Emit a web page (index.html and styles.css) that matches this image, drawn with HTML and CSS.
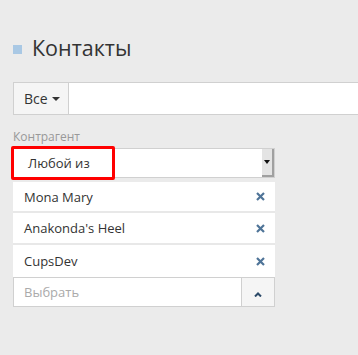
FILE: index.html
```html
<!DOCTYPE html>
<html>
<head>
  <title>Контакты</title>
  <link rel="stylesheet" href="styles.css">
</head>
<body>
  <div class="page">
    <h1 class="title"><span class="title-mark"></span>Контакты</h1>

    <div class="search">
      <button class="search-filter">Все <span class="caret"></span></button>
      <input class="search-input" type="text">
    </div>

    <div class="field">
      <label class="field-label">Контрагент</label>
      <div class="select">
        <span class="select-value">Любой из</span>
        <span class="select-arrow"><span class="select-tri"></span></span>
        <span class="highlight"></span>
      </div>

      <ul class="chosen">
        <li class="chosen-item">Mona Mary
          <svg class="remove" width="9" height="9" viewBox="0 0 9 9"><path d="M1 1L8 8M8 1L1 8"/></svg>
        </li>
        <li class="chosen-item">Anakonda's Heel
          <svg class="remove" width="9" height="9" viewBox="0 0 9 9"><path d="M1 1L8 8M8 1L1 8"/></svg>
        </li>
        <li class="chosen-item">CupsDev
          <svg class="remove" width="9" height="9" viewBox="0 0 9 9"><path d="M1 1L8 8M8 1L1 8"/></svg>
        </li>
      </ul>

      <div class="picker">
        <input class="picker-input" type="text" placeholder="Выбрать">
        <button class="picker-toggle">
          <svg width="8" height="5" viewBox="0 0 8 5"><path d="M1 4.5L4 1.5L7 4.5"/></svg>
        </button>
      </div>
    </div>
  </div>
</body>
</html>
```

FILE: styles.css
```css
html {
  overflow: hidden;
}

body {
  margin: 0;
  background: #ebebeb;
  font-family: "Open Sans", Arial, sans-serif;
  color: #333;
}

.page {
  padding: 33px 0 0 13px;
}

.title {
  display: flex;
  align-items: center;
  margin: 0;
  font-size: 21.5px;
  font-weight: normal;
  line-height: 30px;
  color: #333;
}

.title-mark {
  width: 9px;
  height: 9px;
  margin: 3px 10px 0 0;
  background: #a9c8e4;
}

.search {
  display: flex;
  width: 400px;
  height: 33px;
  margin-top: 19px;
  box-sizing: border-box;
  border: 1px solid #d0d0d0;
  background: #fff;
}

.search-filter {
  display: flex;
  align-items: center;
  width: 55px;
  padding: 0 0 0 10px;
  border: none;
  border-right: 1px solid #d0d0d0;
  background: #f5f5f5;
  font-family: inherit;
  font-size: 14px;
  color: #333;
}

.caret {
  width: 0;
  height: 0;
  margin-left: 4px;
  border-left: 4px solid transparent;
  border-right: 4px solid transparent;
  border-top: 4px solid #333;
}

.search-input {
  flex: 1;
  border: none;
  outline: none;
}

.field {
  width: 262px;
  margin-top: 14px;
}

.field-label {
  display: block;
  font-size: 12px;
  line-height: 16px;
  color: #999;
}

.select {
  position: relative;
  display: flex;
  height: 30px;
  margin-top: 3px;
  box-sizing: border-box;
  border: 1px solid #d0d0d0;
  background: #fff;
}

.select-value {
  flex: 1;
  padding-left: 14px;
  font-size: 13px;
  line-height: 28px;
}

.select-arrow {
  display: flex;
  align-items: center;
  justify-content: center;
  width: 12px;
  box-sizing: border-box;
  background: #e4e4e4;
  border-right: 2px solid #a0a0a0;
  border-bottom: 2px solid #a0a0a0;
}

.select-tri {
  width: 0;
  height: 0;
  border-left: 3px solid transparent;
  border-right: 3px solid transparent;
  border-top: 4px solid #111;
}

.highlight {
  position: absolute;
  left: -3px;
  top: -3px;
  width: 104px;
  height: 34px;
  box-sizing: border-box;
  border: 3px solid #f00;
  border-radius: 2px;
}

.chosen {
  margin: 4px 0 0;
  padding: 0;
  list-style: none;
  background: #fff;
}

.chosen-item {
  display: flex;
  align-items: center;
  justify-content: space-between;
  height: 32px;
  padding: 0 10px 0 11px;
  box-sizing: border-box;
  border-bottom: 2px solid #e8e8e8;
  font-size: 13px;
}

.chosen-item:first-child {
  height: 31px;
}

.chosen-item:last-child {
  border-bottom: none;
}

.remove path {
  stroke: #4f7498;
  stroke-width: 2.2;
}

.picker {
  display: flex;
  height: 30px;
  box-sizing: border-box;
  border: 1px solid #d0d0d0;
  background: #fff;
}

.picker-input {
  flex: 1;
  min-width: 0;
  padding: 0 10px;
  border: none;
  outline: none;
  font-family: inherit;
  font-size: 13px;
}

.picker-input::placeholder {
  color: #aaa;
}

.picker-toggle {
  width: 33px;
  border: none;
  border-left: 1px solid #d0d0d0;
  background: #f5f5f5;
}

.picker-toggle path {
  fill: none;
  stroke: #2c4a68;
  stroke-width: 2;
}
```
